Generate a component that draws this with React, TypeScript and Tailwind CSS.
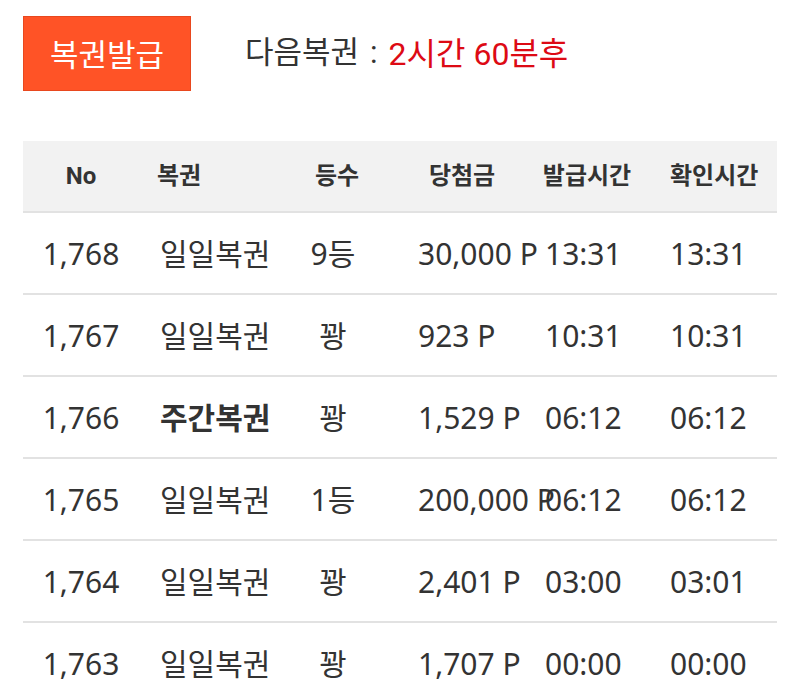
import React from 'react';

const rows = [
  { no: '1,768', name: '일일복권', rank: '9등', prize: '30,000 P', issued: '13:31', checked: '13:31' },
  { no: '1,767', name: '일일복권', rank: '꽝', prize: '923 P', issued: '10:31', checked: '10:31' },
  { no: '1,766', name: '주간복권', rank: '꽝', prize: '1,529 P', issued: '06:12', checked: '06:12', bold: true },
  { no: '1,765', name: '일일복권', rank: '1등', prize: '200,000 P', issued: '06:12', checked: '06:12' },
  { no: '1,764', name: '일일복권', rank: '꽝', prize: '2,401 P', issued: '03:00', checked: '03:01' },
  { no: '1,763', name: '일일복권', rank: '꽝', prize: '1,707 P', issued: '00:00', checked: '00:00' },
];

const cols = 'grid grid-cols-[116px_140px_116px_134px_116px_132px]';

export default function App() {
  return (
    <div className="min-h-[685px] bg-white px-[23px] pt-[16px] text-[#333]" style={{ fontFamily: '"Noto Sans", "Noto Sans CJK KR", sans-serif' }}>
      <div className="flex items-center">
        <button className="flex h-[75px] w-[168px] items-center justify-center border border-[#e8481e] bg-[#ff5326] text-[31px] text-white" style={{ fontFamily: '"Noto Sans CJK KR", sans-serif' }}>
          복권발급
        </button>
        <div className="ml-[54px] flex items-center text-[31px] text-[#333]" style={{ fontFamily: 'Roboto, "Noto Sans CJK KR", sans-serif' }}>
          <span>다음복권</span>
          <span className="mx-[11px]">:</span>
          <span className="text-[32px] text-[#dd0a14]">2시간 60분후</span>
        </div>
      </div>

      <div className="mt-[50px] w-[754px]">
        <div className={`${cols} h-[72px] items-center border-b-2 border-[#e2e2e2] bg-[#f2f2f2] text-[24px] font-bold`} style={{ fontFamily: 'Roboto, "Noto Sans CJK KR", sans-serif' }}>
          <div className="text-center">No</div>
          <div className="pl-[18px]">복권</div>
          <div className="text-center">등수</div>
          <div className="text-center">당첨금</div>
          <div className="text-center">발급시간</div>
          <div className="pl-[25px]">확인시간</div>
        </div>
        {rows.map((r) => (
          <div key={r.no} className={`${cols} h-[82px] items-center border-b-2 border-[#e2e2e2] text-[30px] whitespace-nowrap`}>
            <div className="text-center">{r.no}</div>
            <div className={`pl-[21px] ${r.bold ? 'font-bold' : ''}`}>{r.name}</div>
            <div className="pr-[8px] text-center">{r.rank}</div>
            <div className="pl-[23px]">{r.prize}</div>
            <div className="pl-[16px]">{r.issued}</div>
            <div className="pl-[25px]">{r.checked}</div>
          </div>
        ))}
      </div>
    </div>
  );
}
